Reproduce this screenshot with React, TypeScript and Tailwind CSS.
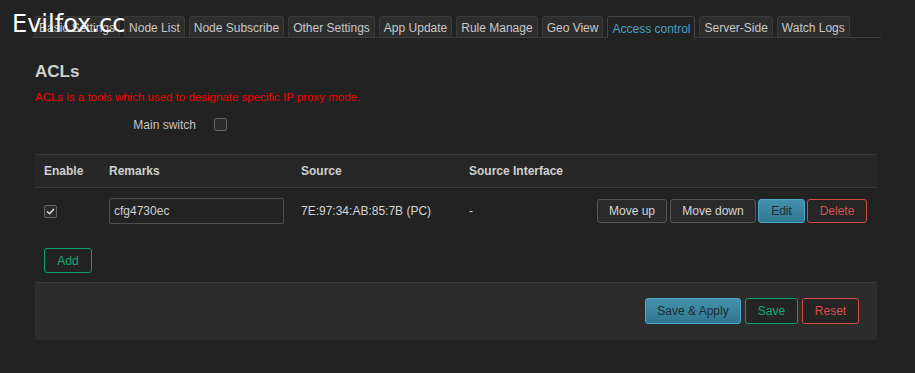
import React from 'react';

const tabs = [
  'Basic Settings',
  'Node List',
  'Node Subscribe',
  'Other Settings',
  'App Update',
  'Rule Manage',
  'Geo View',
  'Access control',
  'Server-Side',
  'Watch Logs',
];

function CheckBox({ checked }: { checked?: boolean }) {
  return (
    <span className="flex h-[13px] w-[13px] items-center justify-center rounded-[2px] border border-[#666] bg-[#2a2a2a]">
      {checked && (
        <svg width="9" height="9" viewBox="0 0 10 10" fill="none">
          <path d="M1.5 5.2 L4 7.5 L8.5 2.5" stroke="#e0e0e0" strokeWidth="1.6" strokeLinecap="round" strokeLinejoin="round" />
        </svg>
      )}
    </span>
  );
}

export default function App() {
  return (
    <div className="relative min-h-screen bg-[#222222] font-['Liberation_Sans',Arial,sans-serif] text-[12px] text-[#cccccc]">
      <div className="absolute left-[12px] top-[10px] font-['DejaVu_Sans',sans-serif] text-[24px] leading-[28px] text-white">
        Evilfox.cc
      </div>

      <div className="pl-[32px] pt-[16px]">
        <ul className="flex w-[849px] gap-[4px] border-b border-[#3e3e3e] pl-[2px]">
          {tabs.map((t) => {
            const active = t === 'Access control';
            return (
              <li
                key={t}
                className={
                  active
                    ? '-mb-px flex h-[22px] items-center rounded-t-[3px] border border-b-0 border-[#444] bg-[#222222] px-[4px] pt-[2px] text-[#4b9fc2]'
                    : 'flex h-[21px] items-center rounded-t-[3px] border border-b-0 border-[#3a3a3a] bg-[#2d2d2d] px-[4px] pt-[2px] text-[#c8c8c8]'
                }
              >
                {t}
              </li>
            );
          })}
        </ul>
      </div>

      <div className="ml-[35px] w-[842px]">
        <h2 className="mt-[24px] h-[20px] text-[17px] font-bold leading-[20px] text-[#cfcfcf]">ACLs</h2>
        <p className="mt-[8px] text-[11.5px] leading-[15px] text-[#f00000]">
          ACLs is a tools which used to designate specific IP proxy mode.
        </p>

        <div className="mt-[13px] flex h-[13px] items-center">
          <span className="w-[161px] text-right text-[#c4c4c4]">Main switch</span>
          <span className="ml-[18px]">
            <CheckBox />
          </span>
        </div>

        <div className="mt-[23px]">
          <div className="grid h-[34px] grid-cols-[65px_192px_168px_1fr] items-center border-y border-[#3a3a3a] bg-[#262626] font-bold text-[#d0d0d0]">
            <div className="pl-[9px]">Enable</div>
            <div className="pl-[9px]">Remarks</div>
            <div className="pl-[9px]">Source</div>
            <div className="pl-[9px]">Source Interface</div>
          </div>

          <div className="grid grid-cols-[65px_192px_168px_1fr_auto] items-center pb-[10px] pt-[10px]">
            <div className="pl-[9px]">
              <CheckBox checked />
            </div>
            <div className="pl-[9px]">
              <input
                readOnly
                value="cfg4730ec"
                className="h-[26px] w-[175px] rounded-[2px] border border-[#4e4e4e] bg-[#222222] px-[4px] text-[12px] text-[#d0d0d0] outline-none"
              />
            </div>
            <div className="pl-[9px] text-[#d4d4d4]">7E:97:34:AB:85:7B (PC)</div>
            <div className="pl-[9px] text-[#d4d4d4]">-</div>
            <div className="flex pr-[10px]">
              <button className="h-[24px] w-[70px] rounded-[3px] border border-[#575757] bg-[#2a2a2a] text-[#d6d6d6]">Move up</button>
              <button className="ml-[3px] h-[24px] w-[86px] rounded-[3px] border border-[#575757] bg-[#2a2a2a] text-[#d6d6d6]">Move down</button>
              <button className="ml-[2px] h-[24px] w-[47px] rounded-[3px] border border-[#4aa6cb] bg-gradient-to-b from-[#4491ad] to-[#30778f] text-[#1c2c34]">Edit</button>
              <button className="ml-[2px] h-[24px] w-[60px] rounded-[3px] border border-[#d24b4b] bg-[#262626] text-[#d65050]">Delete</button>
            </div>
          </div>

          <div className="mt-[14px] pl-[9px]">
            <button className="h-[25px] w-[48px] rounded-[3px] border border-[#0aa06c] bg-[#232323] text-[#14a874]">Add</button>
          </div>
        </div>

        <div className="mt-[9px] flex justify-end gap-[4px] rounded-b-[3px] border-t border-[#3e3e3e] bg-[#2c2c2c] pb-[16px] pr-[18px] pt-[15px]">
          <button className="h-[26px] w-[96px] rounded-[3px] border border-[#4aa6cb] bg-gradient-to-b from-[#4491ad] to-[#30778f] text-[#1c2c34]">Save &amp; Apply</button>
          <button className="h-[26px] w-[53px] rounded-[3px] border border-[#0aa06c] bg-[#242424] text-[#14a874]">Save</button>
          <button className="h-[26px] w-[57px] rounded-[3px] border border-[#d24b4b] bg-[#242424] text-[#d65050]">Reset</button>
        </div>
      </div>
    </div>
  );
}
